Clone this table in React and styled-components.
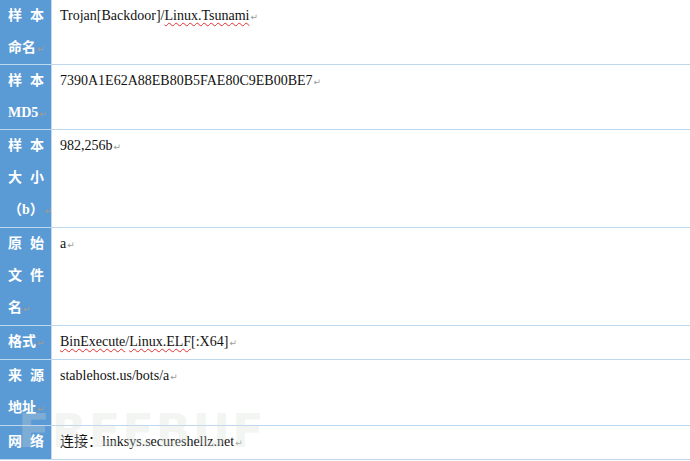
import styled, { createGlobalStyle } from 'styled-components';

const GlobalStyle = createGlobalStyle`
  html, body {
    margin: 0;
    padding: 0;
    background: #ffffff;
  }
  body {
    width: 690px;
    height: 461px;
    overflow: hidden;
  }
`;

const Sheet = styled.div`
  position: relative;
  width: 690px;
`;

const Table = styled.div`
  display: grid;
  grid-template-columns: 52px 1fr;
`;

const LabelCell = styled.div`
  background-color: #5b9bd5;
  border-right: 1px solid #c3d9ef;
  border-bottom: 1px solid #bdd7ee;
  padding-left: 8px;
  color: #ffffff;
  font-family: "Liberation Serif", "Noto Sans CJK SC", serif;
  font-weight: 700;
  font-size: 14px;
`;

const LabelLine = styled.div`
  height: ${({ $tall }) => ($tall ? '33px' : '32px')};
  line-height: 32px;
  white-space: nowrap;
  letter-spacing: ${({ $spread }) => ($spread ? '8px' : '0')};
`;

const ValueCell = styled.div`
  border-bottom: 1px solid #bdd7ee;
  padding-left: 8px;
  font-family: "Liberation Serif", "Noto Sans CJK SC", serif;
  font-size: 14px;
  line-height: 32px;
  color: #111111;
  white-space: nowrap;
`;

const Mark = styled.span`
  font-family: "DejaVu Sans", sans-serif;
  font-size: 9px;
  font-weight: 400;
  letter-spacing: 0;
  color: ${({ $onBlue }) => ($onBlue ? '#a89a8c' : '#9a9a9a')};
  margin-left: 1px;
`;

const Squiggle = styled.span`
  text-decoration: underline wavy #e03030;
  text-decoration-thickness: 1px;
  text-underline-offset: 2px;
`;

const Watermark = styled.div`
  position: absolute;
  left: 18px;
  top: 404px;
  font-family: "DejaVu Sans", sans-serif;
  font-weight: 700;
  font-size: 46px;
  letter-spacing: 2px;
  color: rgba(215, 222, 215, 0.3);
  pointer-events: none;
`;

const rows = [
  {
    label: [['样本', true], ['命名', false]],
    value: (
      <>
        Trojan[Backdoor]/<Squiggle>Linux.Tsunami</Squiggle>
      </>
    ),
  },
  {
    label: [['样本', true], ['MD5', false]],
    value: '7390A1E62A88EB80B5FAE80C9EB00BE7',
  },
  {
    label: [['样本', true], ['大小', true], ['（b）', false, true]],
    value: '982,256b',
  },
  {
    label: [['原始', true], ['文件', true], ['名', false, true]],
    value: 'a',
  },
  {
    label: [['格式', false]],
    value: (
      <>
        <Squiggle>BinExecute</Squiggle>/<Squiggle>Linux.ELF</Squiggle>[:X64]
      </>
    ),
  },
  {
    label: [['来源', true], ['地址', false, true]],
    value: 'stablehost.us/bots/a',
  },
  {
    label: [['网络', true]],
    value: '连接：linksys.secureshellz.net',
  },
];

const App = () => {
  return (
    <>
      <GlobalStyle />
      <Sheet>
        <Table>
          {rows.map((row, i) => (
            <>
              <LabelCell key={`l${i}`}>
                {row.label.map(([text, spread, tall], j) => (
                  <LabelLine key={j} $spread={spread} $tall={tall}>
                    {text}
                    {j === row.label.length - 1 && i !== rows.length - 1 && (
                      <Mark $onBlue>↵</Mark>
                    )}
                  </LabelLine>
                ))}
              </LabelCell>
              <ValueCell key={`v${i}`}>
                {row.value}
                <Mark>↵</Mark>
              </ValueCell>
            </>
          ))}
        </Table>
        <Watermark>FREEBUF</Watermark>
      </Sheet>
    </>
  );
};

export default App;
